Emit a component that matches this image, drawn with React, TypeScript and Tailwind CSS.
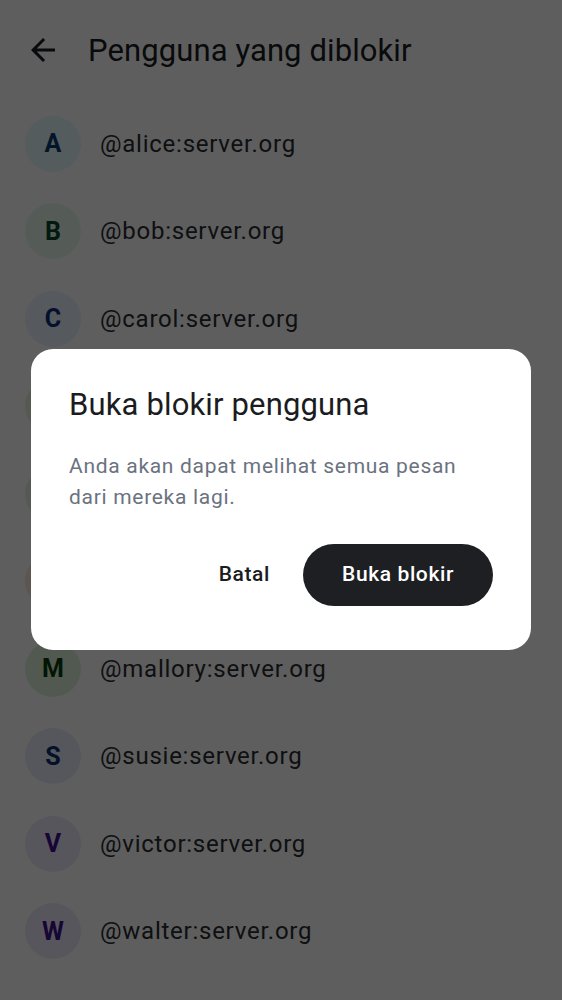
import React from "react";

const users = [
  { l: "A", n: "@alice:server.org", bg: "bg-[#e6f8fb]", fg: "text-[#0a3a6e]" },
  { l: "B", n: "@bob:server.org", bg: "bg-[#e6faef]", fg: "text-[#04452a]" },
  { l: "C", n: "@carol:server.org", bg: "bg-[#e8f0fc]", fg: "text-[#0a2f7a]" },
  { l: "D", n: "@dave:server.org", bg: "bg-[#e3f5dc]", fg: "text-[#1f5214]" },
  { l: "E", n: "@eve:server.org", bg: "bg-[#e3f5dc]", fg: "text-[#1f5214]" },
  { l: "F", n: "@frank:server.org", bg: "bg-[#f8e6d8]", fg: "text-[#6b2f0a]" },
  { l: "M", n: "@mallory:server.org", bg: "bg-[#dcf2dc]", fg: "text-[#0a3d0a]" },
  { l: "S", n: "@susie:server.org", bg: "bg-[#e6edf8]", fg: "text-[#0b2f6e]" },
  { l: "V", n: "@victor:server.org", bg: "bg-[#ece8f8]", fg: "text-[#3d0f8f]" },
  { l: "W", n: "@walter:server.org", bg: "bg-[#ece8f8]", fg: "text-[#3d0f8f]" },
];

export default function App() {
  return (
    <div className="relative w-[562px] h-[1000px] overflow-hidden bg-white font-['Roboto',sans-serif]">
      <div className="flex items-center h-[100px] pl-[25px]">
        <svg width="36" height="36" viewBox="0 0 24 24" className="text-[#1a1c1e]" fill="currentColor">
          <path d="M20 11H7.83l5.59-5.59L12 4l-8 8 8 8 1.41-1.41L7.83 13H20v-2z" />
        </svg>
        <div className="ml-[27px] text-[31px] tracking-[0.1px] text-[#1a1c1e] leading-none">Pengguna yang diblokir</div>
      </div>
      <div className="flex flex-col">
        {users.map((u) => (
          <div key={u.n} className="flex items-center h-[87.5px] pl-[25px]">
            <div className={`w-[56px] h-[56px] rounded-full flex items-center justify-center ${u.bg}`}>
              <span className={`text-[25px] font-bold ${u.fg}`}>{u.l}</span>
            </div>
            <div className="ml-[19px] text-[24px] tracking-[0.75px] text-[#2a2c30]">{u.n}</div>
          </div>
        ))}
      </div>

      <div className="absolute inset-0 bg-black/[0.63]" />

      <div className="absolute left-[31px] top-[349px] w-[500px] h-[301px] rounded-[22px] bg-white pt-[38px] px-[38px]">
        <div className="text-[31px] tracking-[0.15px] leading-[36px] text-[#1a1c1e]">Buka blokir pengguna</div>
        <div className="mt-[28px] text-[21px] leading-[31px] text-[#6b7280] tracking-[0.7px]">
          Anda akan dapat melihat semua pesan dari mereka lagi.
        </div>
        <div className="mt-[31px] flex items-center justify-end">
          <button className="px-[20px] h-[62px] text-[21px] tracking-[0.6px] font-medium text-[#1a1c1e]">Batal</button>
          <button className="ml-[13px] w-[190px] h-[62px] rounded-full bg-[#1e1f23] text-white text-[21px] tracking-[0.6px] font-medium">
            Buka blokir
          </button>
        </div>
      </div>
    </div>
  );
}
